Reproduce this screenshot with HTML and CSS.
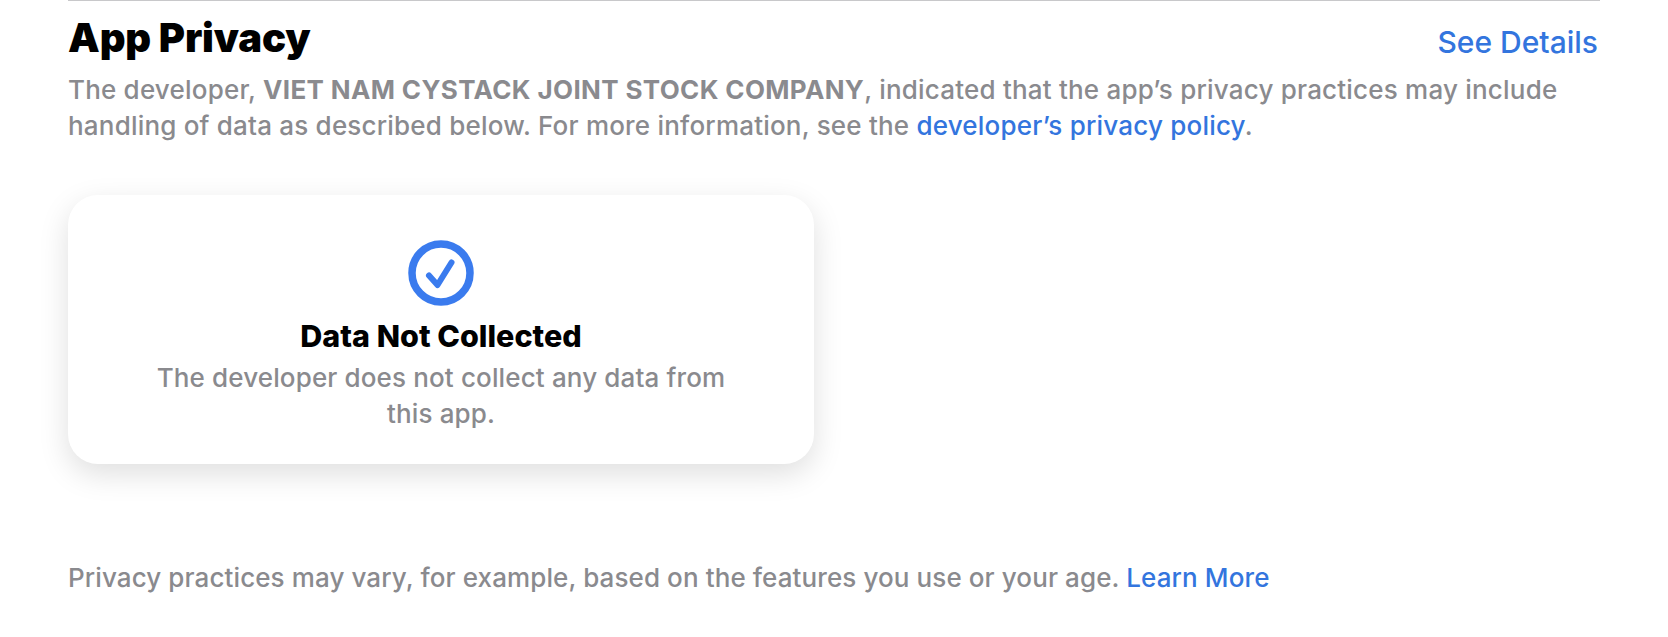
FILE: index.html
```html
<!DOCTYPE html>
<html lang="en">
<head>
<meta charset="utf-8">
<title>App Privacy</title>
<link rel="stylesheet" href="styles.css">
</head>
<body>
<main class="page">
  <header class="head">
    <h2 class="title">App Privacy</h2>
    <a class="link details" href="#">See Details</a>
  </header>
  <p class="text intro">The developer, <strong>VIET NAM CYSTACK JOINT STOCK COMPANY</strong>, indicated that the app’s privacy practices may include handling of data as described below. For more information, see the <a class="link" href="#">developer’s privacy policy</a>.</p>
  <section class="card">
    <svg class="icon" viewBox="0 0 66 66" aria-hidden="true">
      <circle cx="33" cy="33" r="29" fill="none" stroke="#3a7bee" stroke-width="7.5"/>
      <path d="M21 35.5 L29.5 45 L43.5 22.5" fill="none" stroke="#3a7bee" stroke-width="6" stroke-linecap="round" stroke-linejoin="round"/>
    </svg>
    <h3 class="card-title">Data Not Collected</h3>
    <p class="text card-text">The developer does not collect any data from this app.</p>
  </section>
  <p class="text foot">Privacy practices may vary, for example, based on the features you use or your age. <a class="link" href="#">Learn More</a></p>
</main>
</body>
</html>
```
FILE: styles.css
```css
* { box-sizing: border-box; }
html, body { margin: 0; background: #fff; }
body { font-family: Inter, "Liberation Sans", sans-serif; height: 637px; overflow: hidden; }
.page { width: 1532px; margin-left: 68px; border-top: 1.5px solid #c8c8ca; }
.head { display: flex; justify-content: space-between; align-items: flex-start; height: 71px; }
.title { margin: 13px 0 0; font-size: 40px; line-height: 48px; font-weight: 900; color: #000; letter-spacing: -0.15px; }
.link { color: #3375de; text-decoration: none; font-weight: 500; }
.details { margin: 21px 2px 0 0; font-size: 30px; line-height: 40px; }
.text { margin: 0; font-size: 26px; line-height: 36px; font-weight: 500; color: #8a8a8e; }
.text strong { font-weight: 700; letter-spacing: 0.36px; }
.intro { width: 1532px; letter-spacing: 0.2px; }
.card { width: 746px; height: 269px; margin-top: 51px; border-radius: 30px; background: #fff; box-shadow: 0 10px 30px rgba(0,0,0,.13); display: flex; flex-direction: column; align-items: center; padding-top: 45px; }
.icon { width: 66px; height: 66px; display: block; }
.card-title { margin: 10px 0 0; font-size: 30.5px; line-height: 40px; font-weight: 800; color: #000; }
.card-text { width: 590px; margin-top: 4px; text-align: center; letter-spacing: 0.14px; }
.foot { margin-top: 96px; letter-spacing: 0.1px; }
```
